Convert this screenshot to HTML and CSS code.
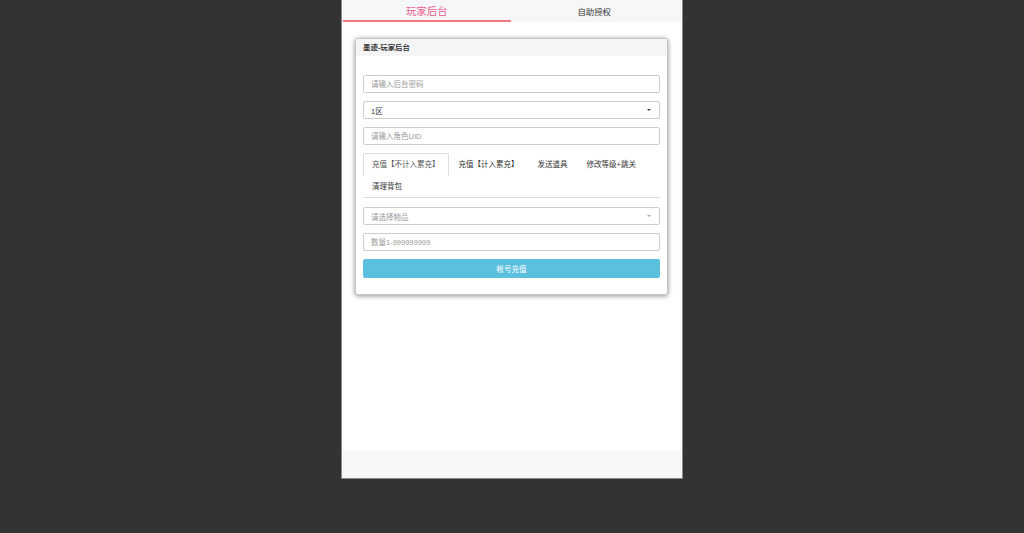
FILE: index.html
```html
<!DOCTYPE html>
<html lang="zh-CN">
<head>
<meta charset="utf-8">
<title>玩家后台</title>
<link rel="stylesheet" href="styles.css">
</head>
<body>
<div class="app">
  <div class="topnav">
    <div class="toptab active">玩家后台</div>
    <div class="toptab">自助授权</div>
  </div>
  <div class="main">
    <div class="card">
      <div class="card-head">墨迹-玩家后台</div>
      <div class="card-body">
        <input class="field" type="password" placeholder="请输入后台密码">
        <div class="field select"><span class="val">1区</span><span class="caret"></span></div>
        <input class="field" type="text" placeholder="请输入角色UID">
        <ul class="tabs">
          <li class="tab active">充值【不计入累充】</li>
          <li class="tab">充值【计入累充】</li>
          <li class="tab">发送道具</li>
          <li class="tab">修改等级+跳关</li>
          <li class="tab">清理背包</li>
        </ul>
        <div class="field select"><span class="ph">请选择物品</span><span class="caret light"></span></div>
        <input class="field" type="text" placeholder="数量1-999999999">
        <button class="btn" type="button">帐号充值</button>
      </div>
    </div>
  </div>
  <div class="footer"></div>
</div>
</body>
</html>
```
FILE: styles.css
```css
html, body {
  margin: 0;
  padding: 0;
  background: #333333;
  font-family: "Liberation Sans", "Noto Sans CJK SC", sans-serif;
}
.app {
  width: 340px;
  height: 478px;
  margin: 0 auto;
  background: #ffffff;
  border: 1px solid #8a8a8a;
  border-top: 0;
  display: flex;
  flex-direction: column;
}
.topnav {
  height: 22px;
  background: #f6f7f9;
  display: flex;
  padding: 0 4px 0 1px;
  box-sizing: border-box;
}
.toptab {
  flex: 1 1 0;
  display: flex;
  align-items: center;
  justify-content: center;
  font-size: 8.4px;
  color: #333;
  box-sizing: border-box;
  padding-left: 0;
}
.toptab.active {
  color: #ec5b8c;
  font-size: 10.4px;
  border-bottom: 2px solid #f2797f;
  padding-top: 1px;
}
.main {
  flex: 1;
  padding: 16px 14px 0 13px;
}
.footer {
  height: 28px;
  background: #f7f8fa;
}
.card {
  border: 1px solid #c4c4c4;
  border-radius: 3px;
  box-shadow: 0 1px 5px rgba(0, 0, 0, 0.45);
  overflow: hidden;
  background: #fff;
}
.card-head {
  height: 17px;
  line-height: 17px;
  background: #f5f5f5;
  padding: 0 7px;
  font-size: 7.4px;
  font-weight: bold;
  color: #333;
}
.card-body {
  padding: 19px 7px 16px;
  display: flex;
  flex-direction: column;
}
.field {
  display: block;
  width: 100%;
  height: 18px;
  box-sizing: border-box;
  border: 1px solid #cccccc;
  border-radius: 2px;
  padding: 0 7px;
  margin: 0 0 8px;
  font-family: inherit;
  font-size: 7.5px;
  color: #333;
  background: #fff;
  outline: none;
}
.field::placeholder {
  color: #999;
}
.select {
  display: flex;
  align-items: center;
  justify-content: space-between;
}
.select .ph {
  color: #999;
}
.caret {
  width: 0;
  height: 0;
  border-left: 2.5px solid transparent;
  border-right: 2.5px solid transparent;
  border-top: 2.5px solid #444;
  margin-right: 1px;
}
.caret.light {
  border-top-color: #aaa;
}
.tabs {
  list-style: none;
  margin: 0 0 9px;
  padding: 0;
  display: flex;
  flex-wrap: wrap;
  border-bottom: 1px solid #dddddd;
}
.tab {
  padding: 0 8px;
  line-height: 21px;
  border: 1px solid transparent;
  border-radius: 2px 2px 0 0;
  margin: 0 1px -1px 0;
  font-size: 7.5px;
  color: #333;
}
.tab.active {
  border-color: #dddddd;
  border-bottom-color: #fff;
  background: #fff;
  color: #555;
}
.btn {
  display: block;
  width: 100%;
  height: 18.5px;
  border: 1px solid #5bc0de;
  border-radius: 2px;
  background: #5bc0de;
  color: #fff;
  font-family: inherit;
  font-size: 7.5px;
  padding: 0;
}
```
